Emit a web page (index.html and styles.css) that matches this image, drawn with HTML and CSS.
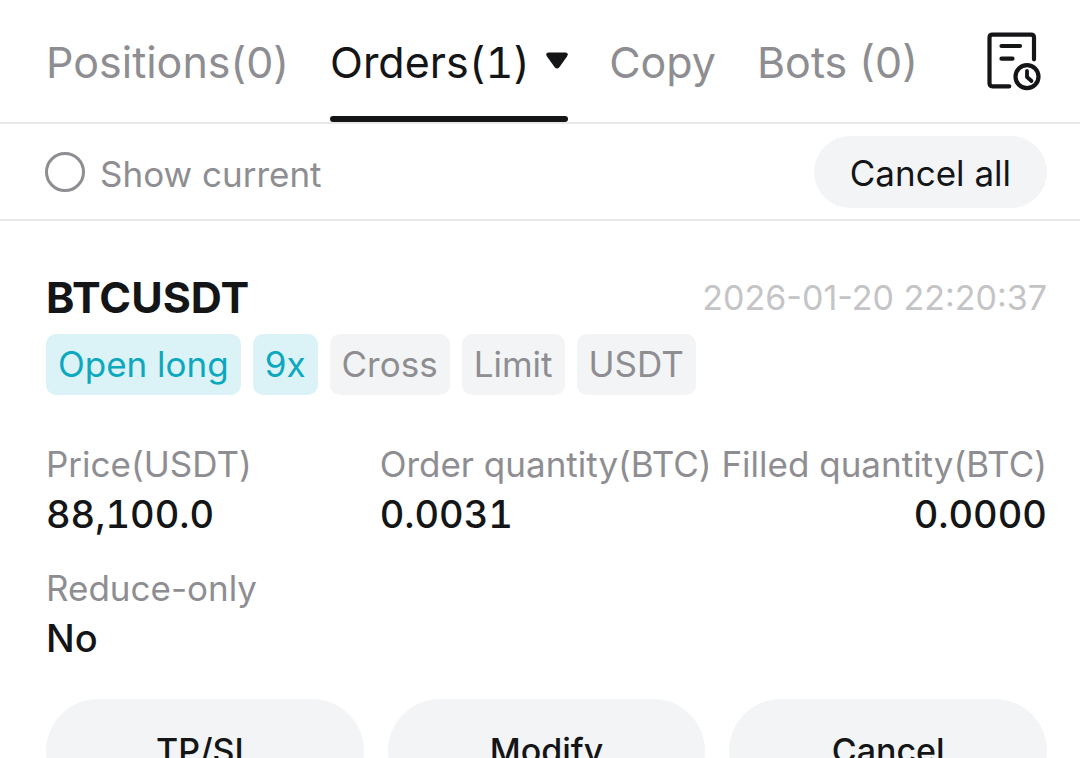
FILE: index.html
```html
<!DOCTYPE html>
<html lang="en">
<head>
<meta charset="utf-8">
<meta name="viewport" content="width=device-width, initial-scale=1">
<title>Orders</title>
<link rel="stylesheet" href="styles.css">
</head>
<body>
<header class="top">
  <nav class="tabs" aria-label="Trading">
    <button class="tab">Positions(0)</button>
    <button class="tab tab-active" aria-current="page">Orders(1)<svg class="caret" viewBox="0 0 22 17" aria-hidden="true"><path d="M2.500 0.500h17q3.500 0.500 1.500 4L13.500 15q-2.500 3-5 0L1 4.500Q-1 1 2.500 0.500z" fill="currentColor"/></svg></button>
    <button class="tab">Copy</button>
    <button class="tab">Bots (0)</button>
  </nav>
  <button class="history" aria-label="Order history">
    <svg viewBox="0 0 56 60" fill="none" stroke="currentColor" stroke-width="4.200" stroke-linecap="round" stroke-linejoin="round" aria-hidden="true">
      <path d="M23.300 55.300H6.500q-3 0-3-3V6.700q0-3 3-3H45q3 0 3 3v21.600M15.500 15h18.500M15.500 27.700h11"/>
      <circle cx="41" cy="45.700" r="11.500"/><path d="M41 40v6l4.500 4" stroke-width="3.800"/>
    </svg>
  </button>
</header>
<section class="filter">
  <label class="show"><input class="radio" type="checkbox"><span class="show-text">Show current</span></label>
  <button class="cancel-all">Cancel all</button>
</section>
<main class="order">
  <div class="heading"><h1 class="symbol">BTCUSDT</h1><time class="time">2026-01-20 22:20:37</time></div>
  <div class="tags"><span class="tag tag-long">Open long</span><span class="tag tag-long">9x</span><span class="tag">Cross</span><span class="tag">Limit</span><span class="tag">USDT</span></div>
  <dl class="details">
    <div class="field"><dt class="name">Price(USDT)</dt><dd class="value">88,100.0</dd></div>
    <div class="field"><dt class="name">Order quantity(BTC)</dt><dd class="value">0.0031</dd></div>
    <div class="field field-end"><dt class="name">Filled quantity(BTC)</dt><dd class="value">0.0000</dd></div>
    <div class="field"><dt class="name">Reduce-only</dt><dd class="value">No</dd></div>
  </dl>
  <div class="actions"><button class="action">TP/SL</button><button class="action">Modify</button><button class="action">Cancel</button></div>
</main>
</body>
</html>
```
FILE: styles.css
```css
* { box-sizing: border-box; }
html { overflow: hidden; }
body { margin: 0; background: #fff; color: #141517; font-family: Inter, "Liberation Sans", sans-serif; }
button { border: 0; padding: 0; background: none; color: inherit; font-family: inherit; white-space: nowrap; }
.top { display: flex; justify-content: space-between; align-items: flex-start; padding: 0 38px 0 46px; border-bottom: 2px solid #e9e9ea; }
.tabs { display: flex; gap: 41px; }
.tab { padding-top: 8px; color: #8e8e92; font-size: 43px; line-height: 108px; }
.tab::after { content: ""; display: block; height: 6px; border-radius: 3px; }
.tab-active { color: #141517; font-variant-numeric: tabular-nums; }
.tab-active::after { background: #141517; }
.caret { width: 22px; height: 17px; margin-left: 16px; vertical-align: 9px; }
.history { margin-top: 31px; }
.history svg { display: block; width: 56px; height: 60px; }
.filter { display: flex; justify-content: space-between; align-items: center; padding: 12px 33px 11px 45px; border-bottom: 2px solid #e9e9ea; }
.show { display: flex; align-items: center; gap: 15px; color: #8e8e92; font-size: 35px; line-height: 40px; }
.show-text { padding-top: 4px; }
.radio { appearance: none; width: 40px; height: 40px; margin: 0; border: 3px solid #8e8e92; border-radius: 50%; }
.cancel-all { padding: 2px 36px 0; border-radius: 36px; background: #f3f4f6; font-size: 35px; line-height: 70px; }
.order { padding: 50px 33px 0 46px; }
.heading { display: flex; justify-content: space-between; align-items: center; }
.symbol { margin: 0; font-size: 43px; line-height: 52px; font-weight: 700; }
.time { color: #c4c4c6; font-size: 34px; }
.tags { display: flex; gap: 12px; margin-top: 11px; }
.tag { padding: 0 12px; border-radius: 10px; background: #f3f4f6; color: #8e8e92; font-size: 35px; line-height: 61px; }
.tag-long { background: #dbf3f7; color: #0ba8c0; }
.details { display: grid; grid-template-columns: 1fr 1fr 1fr; row-gap: 24px; margin: 44px 0 0; }
.field { white-space: nowrap; }
.field-end { display: flex; flex-direction: column; align-items: flex-end; }
.name { color: #8e8e92; font-size: 35px; line-height: 50px; }
.value { margin: 0; font-size: 38px; font-weight: 500; line-height: 50px; font-variant-numeric: tabular-nums; }
.actions { display: grid; grid-template-columns: repeat(3, 1fr); gap: 24px; margin-top: 36px; }
.action { border-radius: 52px; background: #f3f4f6; font-size: 34px; font-weight: 500; line-height: 104px; }
```
